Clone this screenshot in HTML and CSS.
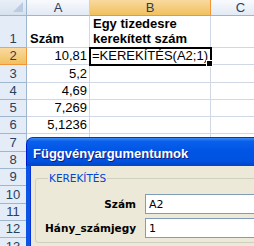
FILE: index.html
```html
<!DOCTYPE html>
<html>
<head>
<meta charset="utf-8">
<link rel="stylesheet" href="styles.css">
</head>
<body>
<div class="sheet">
  <div class="grid">
    <div class="corner"><span class="tri"></span></div>
    <div class="ch">A</div>
    <div class="ch sel">B</div>
    <div class="ch">C</div>

    <div class="rh tall">1</div>
    <div class="c tall bold">Szám</div>
    <div class="c tall bold wrap">Egy tizedesre kerekített szám</div>
    <div class="c tall"></div>

    <div class="rh rsel">2</div>
    <div class="c num">10,81</div>
    <div class="c active">=KEREKÍTÉS(A2;1)<span class="handle"></span></div>
    <div class="c"></div>

    <div class="rh">3</div><div class="c num">5,2</div><div class="c"></div><div class="c"></div>
    <div class="rh">4</div><div class="c num">4,69</div><div class="c"></div><div class="c"></div>
    <div class="rh">5</div><div class="c num">7,269</div><div class="c"></div><div class="c"></div>
    <div class="rh">6</div><div class="c num">5,1236</div><div class="c"></div><div class="c"></div>
    <div class="rh">7</div><div class="c"></div><div class="c"></div><div class="c"></div>
    <div class="rh">8</div><div class="c"></div><div class="c"></div><div class="c"></div>
    <div class="rh">9</div><div class="c"></div><div class="c"></div><div class="c"></div>
    <div class="rh">10</div><div class="c"></div><div class="c"></div><div class="c"></div>
    <div class="rh">11</div><div class="c"></div><div class="c"></div><div class="c"></div>
    <div class="rh">12</div><div class="c"></div><div class="c"></div><div class="c"></div>
    <div class="rh">13</div><div class="c"></div><div class="c"></div><div class="c"></div>
  </div>

  <div class="dialog">
    <div class="titlebar">Függvényargumentumok</div>
    <div class="dbody">
      <fieldset class="group">
        <legend>KEREKÍTÉS</legend>
        <div class="args">
          <label class="lbl">Szám</label>
          <div class="inp">A2</div>
          <label class="lbl">Hány_számjegy</label>
          <div class="inp">1</div>
        </div>
      </fieldset>
    </div>
  </div>
</div>
</body>
</html>
```

FILE: styles.css
```css
html, body {
  margin: 0;
  padding: 0;
  background: #fff;
  overflow: hidden;
}
.sheet {
  position: relative;
  width: 254px;
  height: 246px;
  overflow: hidden;
  font-family: "Liberation Sans", Arial, sans-serif;
  font-size: 13px;
  color: #000;
}
.grid {
  display: grid;
  grid-template-columns: 27px 63px 121px 60px;
  grid-template-rows: 16px 32px repeat(12, 17.3px);
}
.grid > div {
  box-sizing: border-box;
  border-right: 1px solid #D0D7E5;
  border-bottom: 1px solid #D0D7E5;
  white-space: nowrap;
}
.corner {
  position: relative;
  background: linear-gradient(#E9EFF7, #D6E1EE);
  border-right: 1px solid #9EB6CE !important;
  border-bottom: 1px solid #9EB6CE !important;
}
.tri {
  position: absolute;
  right: 3px;
  bottom: 3px;
  width: 0;
  height: 0;
  border-left: 10px solid transparent;
  border-bottom: 10px solid #BACCE2;
}
.ch {
  background: linear-gradient(#F8FAFD, #E3EAF4);
  border-right: 1px solid #C5D3E3 !important;
  border-bottom: 1px solid #9EB6CE !important;
  color: #27415F;
  text-align: center;
  line-height: 15px;
  font-size: 13px;
}
.ch.sel {
  background: linear-gradient(#F9D99F, #F1C15F);
  border-right: 1px solid #F29536 !important;
  border-bottom: 1px solid #F29536 !important;
}
.rh {
  background: #E4ECF7;
  border-right: 1px solid #9EB6CE !important;
  border-bottom: 1px solid #9EB6CE !important;
  color: #27415F;
  text-align: center;
  display: flex;
  align-items: flex-end;
  justify-content: center;
  line-height: 16px;
}
.rh.rsel {
  background: linear-gradient(#F9D99F, #F1C15F);
  border-right: 1px solid #F29536 !important;
  border-bottom: 1px solid #F29536 !important;
}
.c {
  display: flex;
  align-items: flex-end;
  padding: 0 2px;
  line-height: 16px;
  position: relative;
}
.c.bold { font-weight: bold; padding-left: 3px; }
.c.wrap { white-space: normal; line-height: 15px; padding-bottom: 1px; }
.c.num { justify-content: flex-end; }
.c.tall { align-items: flex-end; }
.c.active {
  outline: 2px solid #000;
  outline-offset: -1px;
  overflow: visible;
  padding-left: 2px;
  z-index: 1;
}
.handle {
  position: absolute;
  right: -3px;
  bottom: -3px;
  width: 5px;
  height: 5px;
  background: #000;
  border: 1px solid #fff;
}

.dialog {
  position: absolute;
  left: 26px;
  top: 137px;
  width: 240px;
  height: 120px;
  font-family: "DejaVu Sans", Tahoma, sans-serif;
  font-size: 11px;
  z-index: 2;
}
.titlebar {
  height: 29px;
  box-sizing: border-box;
  border-radius: 7px 7px 0 0;
  background: linear-gradient(#3A8CF5 0%, #0A5FEB 12%, #0055E5 45%, #0053E1 80%, #0046C8 100%);
  border-left: 1px solid #0019CF;
  border-top: 1px solid #0831D9;
  color: #fff;
  font-family: "Liberation Sans", Arial, sans-serif;
  font-weight: bold;
  font-size: 13px;
  padding: 8px 0 0 6px;
  text-shadow: 1px 1px 0 #0A1E80;
}
.dbody {
  height: 100px;
  background: #ECE9D8;
  border-left: 4px solid #0A55E3;
  box-shadow: inset 1px 0 0 #0831D9;
  padding: 6px 0 0 5px;
  box-sizing: border-box;
}
.group {
  margin: 0;
  border: 1px solid #D0D0BF;
  border-radius: 3px;
  padding: 10px 0 4px 9px;
  width: 260px;
  box-sizing: border-box;
}
.group legend {
  color: #0046D5;
  font-size: 10.5px;
  padding: 0 1px;
  margin-left: 3px;
}
.args {
  display: grid;
  grid-template-columns: 91px 130px;
  column-gap: 9px;
  row-gap: 4px;
  align-items: center;
}
.lbl {
  font-weight: bold;
  text-align: right;
  font-size: 10.5px;
  color: #000;
}
.inp {
  height: 20px;
  box-sizing: border-box;
  border: 1px solid #7F9DB9;
  background: #fff;
  padding: 3px 0 0 3px;
  font-size: 11px;
}
```
